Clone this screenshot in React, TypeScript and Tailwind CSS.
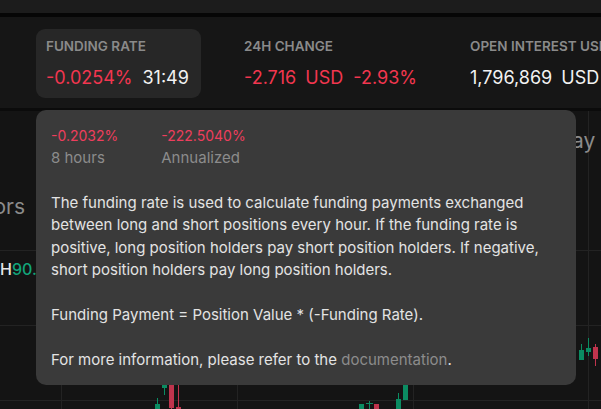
import React from 'react';

interface Stat {
  label: string;
  values: { text: string; tone: 'red' | 'white' }[];
  active?: boolean;
  width?: string;
}

const stats: Stat[] = [
  {
    label: 'Funding Rate',
    values: [
      { text: '-0.0254%', tone: 'red' },
      { text: '31:49', tone: 'white' },
    ],
    active: true,
    width: 'w-[165px]',
  },
  {
    label: '24H Change',
    values: [
      { text: '-2.716 USD', tone: 'red' },
      { text: '-2.93%', tone: 'red' },
    ],
    width: 'w-[193px]',
  },
  {
    label: 'Open Interest USD',
    values: [{ text: '1,796,869 USD', tone: 'white' }],
  },
];

// candles in chart coords (chart top sits at 111px)
const candles = [
  { x: 155, o: 293, c: 298, hi: 287, lo: 298, up: true },
  { x: 162, o: 259, c: 277, hi: 259, lo: 284, up: true },
  { x: 169, o: 259, c: 297, hi: 259, lo: 298, up: false },
  { x: 176, o: 296, c: 298, hi: 259, lo: 298, up: false },
  { x: 359, o: 293, c: 298, hi: 293, lo: 298, up: true },
  { x: 374, o: 293, c: 298, hi: 293, lo: 298, up: false },
  { x: 396, o: 288, c: 298, hi: 282, lo: 298, up: true },
  { x: 403, o: 270, c: 289, hi: 270, lo: 289, up: true },
  { x: 579, o: 239, c: 249, hi: 233, lo: 249, up: true },
  { x: 586, o: 237, c: 241, hi: 227, lo: 245, up: true },
  { x: 593, o: 236, c: 248, hi: 233, lo: 255, up: false },
];

function Chart() {
  return (
    <svg width="601" height="298" className="block">
      {[139, 214, 289].map((y) => (
        <line key={y} x1="0" x2="601" y1={y + 0.5} y2={y + 0.5} stroke="#232323" />
      ))}
      {[61, 237, 413, 588].map((x) => (
        <line key={x} x1={x + 0.5} x2={x + 0.5} y1="0" y2="298" stroke="#232323" />
      ))}
      {candles.map((k, i) => {
        const color = k.up ? '#0b8c62' : '#c0344d';
        return (
          <g key={i}>
            <line x1={k.x + 2.5} x2={k.x + 2.5} y1={k.hi} y2={k.lo} stroke={color} />
            <rect x={k.x} y={k.o} width="5" height={k.c - k.o} fill={color} />
          </g>
        );
      })}
      {/* doji */}
      <line x1="369.5" x2="369.5" y1="290" y2="298" stroke="#0b8c62" />
      <line x1="366" x2="373" y1="292.5" y2="292.5" stroke="#0b8c62" />
    </svg>
  );
}

export default function App() {
  return (
    <div className="relative w-[601px] h-[409px] overflow-hidden bg-[#141414] font-['Inter',sans-serif]">
      <div className="h-[13px] bg-[#1c1c1c]" />
      <div className="h-[4px] bg-[#060606]" />

      <div className="h-[91px] bg-[#161616] flex items-start gap-[33px] pl-[36px] pt-[12px] whitespace-nowrap">
        {stats.map((s) => (
          <div
            key={s.label}
            className={`shrink-0 h-[69px] px-[10px] pt-[9px] rounded-[9px] ${s.active ? 'bg-[#272727]' : ''} ${s.width ?? ''}`}
          >
            <div className="text-[13.5px] leading-[16px] font-semibold uppercase text-[#8a8a8a]">{s.label}</div>
            <div className="mt-[12px] flex gap-[10px] text-[18px] leading-[24px]">
              {s.values.map((v) => (
                <span
                  key={v.text}
                  className={`${v.tone === 'red' ? 'text-[#f2364f]' : 'text-[#f2f2f2]'} [word-spacing:4px]`}
                >
                  {v.text}
                </span>
              ))}
            </div>
          </div>
        ))}
      </div>
      <div className="h-[3px] bg-[#0b0b0b]" />

      <div className="relative h-[298px]">
        <Chart />
        <span className="absolute right-[576px] top-[82px] text-[21px] leading-[28px] text-[#8b8b8b]">ors</span>
        <span className="absolute left-[0px] top-[148px] text-[16px] leading-[20px] font-medium">
          <span className="text-[#e8e8e8]">H</span>
          <span className="text-[#12a47a]">90.</span>
        </span>
        <span className="absolute left-[572px] top-[16px] text-[21px] leading-[28px] text-[#8b8b8b]">ay</span>
      </div>

      <div className="absolute left-[36px] top-[110px] w-[540px] h-[275px] rounded-[10px] bg-[#3a3a3a] px-[15px] pt-[15px]">
        <div className="flex gap-[43px] leading-[22px]">
          <div>
            <div className="text-[14px] text-[#ee3e5d]">-0.2032%</div>
            <div className="text-[15px] text-[#8c8c8c]">8 hours</div>
          </div>
          <div>
            <div className="text-[14px] text-[#ee3e5d]">-222.5040%</div>
            <div className="text-[15px] text-[#8c8c8c]">Annualized</div>
          </div>
        </div>
        <div className="mt-[23px] text-[15px] leading-[22.4px] text-[#e3e3e3]">
          <p>
            The funding rate is used to calculate funding payments exchanged between long and short positions every
            hour. If the funding rate is positive, long position holders pay short position holders. If negative,
            short position holders pay long position holders.
          </p>
          <p className="mt-[22.4px]">Funding Payment = Position Value * (-Funding Rate).</p>
          <p className="mt-[22.4px]">
            For more information, please refer to the <span className="text-[#8c8c8c]">documentation</span>.
          </p>
        </div>
      </div>
    </div>
  );
}
